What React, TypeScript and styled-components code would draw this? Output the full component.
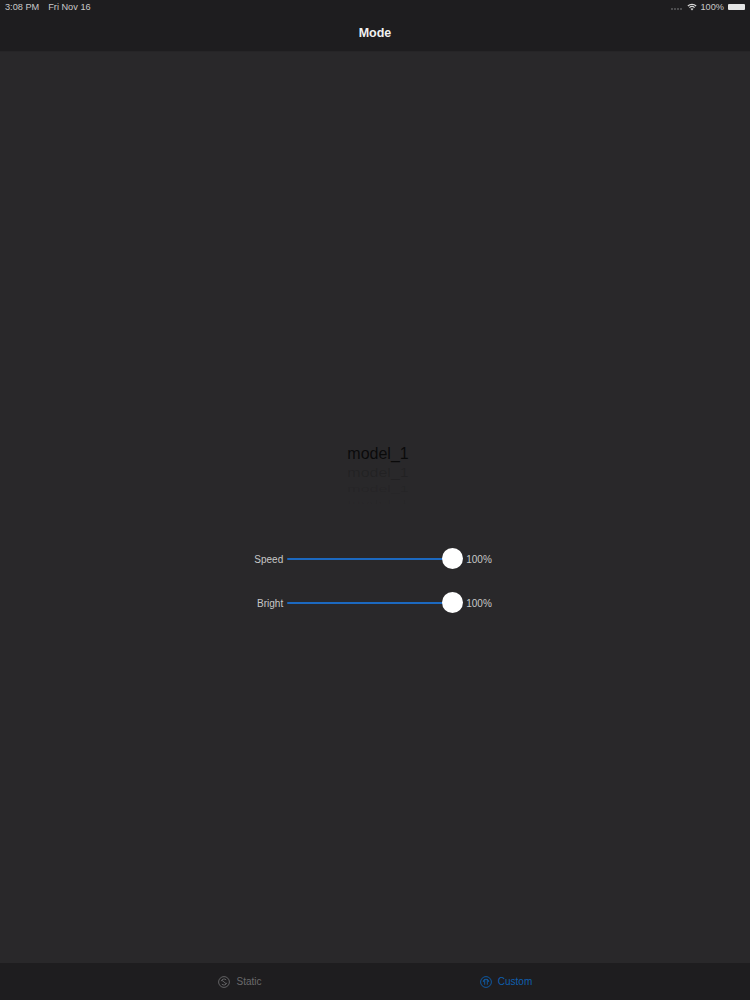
import styled, { createGlobalStyle } from "styled-components"

const GlobalStyle = createGlobalStyle`
    html, body {
        margin: 0;
        padding: 0;
        background: #29282a;
    }
    body {
        font-family: "Liberation Sans", Arial, sans-serif;
    }
`

const sliders = [
    { name: "Speed", value: 100 },
    { name: "Bright", value: 100 },
]

//the picker wheel: rows get flatter and dimmer as they roll away
const wheelItems = [
    { label: "model_1", opacity: 0.75, height: 20, squash: 1 },
    { label: "model_1", opacity: 0.16, height: 17, squash: 0.8 },
    { label: "model_1", opacity: 0.09, height: 15, squash: 0.55 },
    { label: "model_1", opacity: 0.04, height: 13, squash: 0.35 },
]

const WifiIcon = () => (
    <svg width="10" height="8" viewBox="0 0 12 9">
        <path d="M6 8.8 L4.2 6.7 A2.7 2.7 0 0 1 7.8 6.7 Z" fill="#d8d8d8" />
        <path d="M3.4 5.8 L2.4 4.7 A5.3 5.3 0 0 1 9.6 4.7 L8.6 5.8 A3.9 3.9 0 0 0 3.4 5.8 Z" fill="#d8d8d8" />
        <path d="M1.6 3.9 L0.5 2.8 A8 8 0 0 1 11.5 2.8 L10.4 3.9 A6.5 6.5 0 0 0 1.6 3.9 Z" fill="#d8d8d8" />
    </svg>
)

const TabIcon = (props: { color: string, custom?: boolean }) => (
    <svg width="12" height="12" viewBox="0 0 12 12" fill="none" stroke={props.color} strokeWidth="0.9">
        <circle cx="6" cy="6" r="5.4" />
        {props.custom
            ? <path d="M4.7 3.3 V8.7 M7.3 3.3 V8.7 M3.2 6 A2.8 2.8 0 0 1 8.8 6" />
            : <path d="M3.2 5.2 A3 3 0 0 1 8.2 3.9 M8.8 6.8 A3 3 0 0 1 3.8 8.1 M4 4.4 L8 7.6" />}
    </svg>
)

export default function App() {
    return (
        <Page>
            <GlobalStyle />
            <Header>
                <StatusBar>
                    <StatusGroup>
                        <StatusText>3:08 PM</StatusText>
                        <StatusText>Fri Nov 16</StatusText>
                    </StatusGroup>
                    <StatusIcons>
                        <SignalDots />
                        <WifiIcon />
                        <StatusText>100%</StatusText>
                        <Battery />
                    </StatusIcons>
                </StatusBar>
                <Title>Mode</Title>
            </Header>
            <Main>
                <Wheel>
                    {wheelItems.map((item, i) => (
                        <WheelItem key={i} $fade={item.opacity} $height={item.height} $squash={item.squash}>{item.label}</WheelItem>
                    ))}
                </Wheel>
                <Sliders>
                    {sliders.map((s) => (
                        <SliderRow key={s.name}>
                            <SliderLabel>{s.name}</SliderLabel>
                            <Track>
                                <Thumb />
                            </Track>
                            <SliderValue>{s.value}%</SliderValue>
                        </SliderRow>
                    ))}
                </Sliders>
            </Main>
            <TabBar>
                <Tab>
                    <TabIcon color="#6a6a6c" />
                    <TabLabel $active={false}>Static</TabLabel>
                </Tab>
                <Tab>
                    <TabIcon color="#0f5fae" custom />
                    <TabLabel $active={true}>Custom</TabLabel>
                </Tab>
            </TabBar>
        </Page>
    )
}

const Page = styled.div`
    display: flex;
    flex-direction: column;
    width: 750px;
    height: 1000px;
    overflow: hidden;
    background: #29282a;
`

const Header = styled.header`
    display: flex;
    flex-direction: column;
    height: 51px;
    flex-shrink: 0;
    background: #1e1d1f;
    border-bottom: 1px solid #262527;
`

const StatusBar = styled.div`
    display: flex;
    justify-content: space-between;
    align-items: center;
    height: 14px;
    padding: 0 5px 0 5px;
`

const StatusGroup = styled.div`
    display: flex;
    align-items: center;
    gap: 9px;
`

const StatusIcons = styled.div`
    display: flex;
    align-items: center;
    gap: 4px;
`

const StatusText = styled.span`
    font-size: 9.2px;
    color: #c9c9c9;
`

const SignalDots = styled.div`
    width: 11px;
    height: 2px;
    margin-right: 1px;
    margin-top: 3px;
    background: repeating-linear-gradient(90deg, #4c4c4e 0 2px, transparent 2px 3px);
`

const Battery = styled.div`
    width: 17px;
    height: 6px;
    background: #e4e4e4;
    border-radius: 1px;
`

const Title = styled.div`
    flex: 1;
    display: flex;
    justify-content: center;
    align-items: center;
    font-size: 12.5px;
    font-weight: bold;
    color: #f0f0f0;
`

const Main = styled.main`
    flex: 1;
    display: flex;
    flex-direction: column;
    align-items: center;
    padding-top: 392px;
    background: #29282a;
`

const Wheel = styled.div`
    display: flex;
    flex-direction: column;
    align-items: center;
    width: 120px;
    margin-left: 6px;
`

const WheelItem = styled.div<{ $fade: number, $height: number, $squash: number }>`
    height: ${props => props.$height}px;
    line-height: ${props => props.$height}px;
    font-size: 16px;
    color: rgba(0, 0, 0, ${props => props.$fade});
    transform: scaleY(${props => props.$squash});
`

const Sliders = styled.div`
    display: flex;
    flex-direction: column;
    gap: 22px;
    margin-top: 39px;
    margin-right: 9px;
`

const SliderRow = styled.div`
    display: flex;
    align-items: center;
    height: 22px;
`

const SliderLabel = styled.span`
    width: 34px;
    margin-right: 4px;
    font-size: 10px;
    text-align: right;
    color: #c8c8c8;
`

const Track = styled.div`
    position: relative;
    width: 165px;
    height: 2px;
    border-radius: 1px;
    background: #1c69c0;
`

const Thumb = styled.div`
    position: absolute;
    top: -10px;
    right: -11px;
    width: 21px;
    height: 21px;
    border-radius: 50%;
    background: #ffffff;
`

const SliderValue = styled.span`
    margin-left: 14px;
    font-size: 10px;
    color: #c8c8c8;
`

const TabBar = styled.nav`
    display: flex;
    height: 37px;
    flex-shrink: 0;
    padding-left: 107px;
    background: #1e1d1f;
`

const Tab = styled.div`
    width: 266px;
    display: flex;
    justify-content: center;
    align-items: center;
    gap: 6px;
`

const TabLabel = styled.span<{ $active: boolean }>`
    font-size: 10px;
    color: ${props => props.$active ? "#0f5fae" : "#6a6a6c"};
`
